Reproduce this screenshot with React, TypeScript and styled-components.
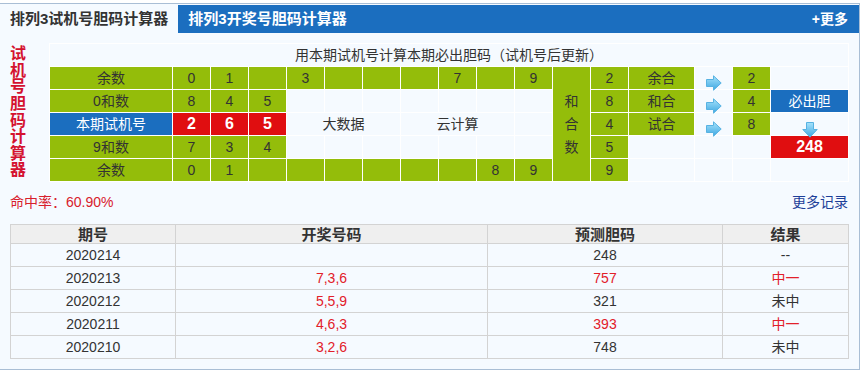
import styled, { createGlobalStyle } from "styled-components";

const GlobalStyle = createGlobalStyle`
body {
    margin: 0;
    background: #fff;
    font-family: "Liberation Sans", "Noto Sans CJK SC", sans-serif;
}
`;

const Panel = styled.div`
margin-top: 3px;
width: 859px;
border: 1px solid #a9bed5;
border-left: none;
background: #f5faff;
padding-bottom: 10px;
`;

const TabBar = styled.div`
margin-top: 1px;
height: 28px;
display: flex;
background: #1b6ebf;
`;

const Tab = styled.div<{ $active?: boolean }>`
padding: 0 10px;
line-height: 28px;
font-size: 15px;
font-weight: bold;
color: ${(p) => (p.$active ? "#333" : "#fff")};
background: ${(p) => (p.$active ? "#f5faff" : "transparent")};
`;

const MoreLink = styled.a`
margin-left: auto;
padding-right: 11px;
line-height: 28px;
font-size: 14px;
font-weight: bold;
color: #fff;
text-decoration: none;
`;

const Body = styled.div`
padding: 0 11px 0 10px;
`;

const CalcArea = styled.div`
display: flex;
margin-top: 10px;
`;

const SideTitle = styled.div`
width: 39px;
flex-shrink: 0;
display: flex;
align-items: center;
`;

const SideText = styled.div`
width: 16px;
font-size: 16px;
line-height: 16.6px;
font-weight: bold;
color: #d4122f;
`;

const CalcTable = styled.table`
border-collapse: collapse;
table-layout: fixed;
width: 799px;
`;

type Tone = "green" | "blue" | "red" | "plain";

const toneBg: Record<Tone, string> = {
    green: "#94bd0a",
    blue: "#1b6ebf",
    red: "#e00e10",
    plain: "transparent",
};

const Cell = styled.td<{ $tone?: Tone; $big?: boolean }>`
border: 1px solid #fff;
padding: 0;
height: 22px;
line-height: 20px;
text-align: center;
vertical-align: middle;
font-size: ${(p) => (p.$big ? "16px" : "14px")};
font-weight: ${(p) => (p.$big ? "bold" : "normal")};
color: ${(p) => (p.$tone === "blue" || p.$tone === "red" ? "#fff" : "#333")};
background: ${(p) => toneBg[p.$tone || "plain"]};
`;

const StackCell = styled(Cell)`
line-height: 23px;
`;

const IconCell = styled(Cell)`
vertical-align: top;
line-height: 0;

svg {
    display: block;
    margin: ${(p) => (p.$big ? "9px auto -9px" : "8px auto -8px")};
}
`;

const StatsRow = styled.div`
display: flex;
justify-content: space-between;
margin-top: 10px;
line-height: 20px;
font-size: 14px;
`;

const HitRate = styled.span`
color: #d8202c;
`;

const RecordLink = styled.a`
color: #1d3f99;
text-decoration: none;
`;

const HistoryTable = styled.table`
margin-top: 12px;
border-collapse: collapse;
table-layout: fixed;
width: 838px;
`;

const HeadCell = styled.th`
height: 18px;
line-height: 17px;
padding: 0;
border: 1px solid #d3d3d3;
background: #efefef;
font-size: 15px;
font-weight: bold;
color: #333;
`;

const HistCell = styled.td<{ $red?: boolean }>`
height: 22px;
line-height: 20px;
padding: 0;
border: 1px solid #d3d3d3;
text-align: center;
font-size: 14px;
color: ${(p) => (p.$red ? "#e2202a" : "#333")};
`;

const RightArrow = () => (
    <svg width="16" height="16" viewBox="0 0 16 16">
        <defs>
            <linearGradient id="arrowR" x1="0" y1="0" x2="0" y2="1">
                <stop offset="0" stopColor="#a6e2fb" />
                <stop offset="1" stopColor="#3ea8e2" />
            </linearGradient>
        </defs>
        <path d="M0.5 4.5H7.5V0.8L15.2 8L7.5 15.2V11.5H0.5Z" fill="url(#arrowR)" stroke="#57b2e2" strokeWidth="1" />
    </svg>
);

const DownArrow = () => (
    <svg width="16" height="16" viewBox="0 0 16 16">
        <defs>
            <linearGradient id="arrowD" x1="0" y1="0" x2="0" y2="1">
                <stop offset="0" stopColor="#a6e2fb" />
                <stop offset="1" stopColor="#3ea8e2" />
            </linearGradient>
        </defs>
        <path d="M4.5 0.5H11.5V7.5H15.2L8 15.2L0.8 7.5H4.5Z" fill="url(#arrowD)" stroke="#57b2e2" strokeWidth="1" />
    </svg>
);

const widths = [123, 38, 38, 38, 38, 38, 38, 38, 38, 38, 38, 38, 38, 66, 38, 38, 78];

const remainTop = ["0", "1", "", "3", "", "", "", "7", "", "9"];
const remainBottom = ["0", "1", "", "", "", "", "", "", "8", "9"];

const history = [
    { issue: "2020214", draw: "", pick: "248", hit: false, result: "--" },
    { issue: "2020213", draw: "7,3,6", pick: "757", hit: true, result: "中一" },
    { issue: "2020212", draw: "5,5,9", pick: "321", hit: false, result: "未中" },
    { issue: "2020211", draw: "4,6,3", pick: "393", hit: true, result: "中一" },
    { issue: "2020210", draw: "3,2,6", pick: "748", hit: false, result: "未中" },
];

const blanks = (n: number) => Array.from({ length: n }, (_, i) => <Cell key={"b" + i} />);

export default function App() {
    return (
        <>
            <GlobalStyle />
            <Panel>
                <TabBar>
                    <Tab $active>排列3试机号胆码计算器</Tab>
                    <Tab>排列3开奖号胆码计算器</Tab>
                    <MoreLink href="#">+更多</MoreLink>
                </TabBar>
                <Body>
                    <CalcArea>
                        <SideTitle>
                            <SideText>试机号胆码计算器</SideText>
                        </SideTitle>
                        <CalcTable>
                            <colgroup>
                                {widths.map((w, i) => <col key={i} style={{ width: w }} />)}
                            </colgroup>
                            <tbody>
                                <tr>
                                    <Cell colSpan={17}>用本期试机号计算本期必出胆码（试机号后更新）</Cell>
                                </tr>
                                <tr>
                                    <Cell $tone="green">余数</Cell>
                                    {remainTop.map((d, i) => <Cell key={i} $tone="green">{d}</Cell>)}
                                    <StackCell $tone="green" rowSpan={5}>和<br />合<br />数</StackCell>
                                    <Cell $tone="green">2</Cell>
                                    <Cell $tone="green">余合</Cell>
                                    <IconCell><RightArrow /></IconCell>
                                    <Cell $tone="green">2</Cell>
                                    <Cell />
                                </tr>
                                <tr>
                                    <Cell $tone="green">0和数</Cell>
                                    {["8", "4", "5"].map((d, i) => <Cell key={i} $tone="green">{d}</Cell>)}
                                    {blanks(7)}
                                    <Cell $tone="green">8</Cell>
                                    <Cell $tone="green">和合</Cell>
                                    <IconCell><RightArrow /></IconCell>
                                    <Cell $tone="green">4</Cell>
                                    <Cell $tone="blue">必出胆</Cell>
                                </tr>
                                <tr>
                                    <Cell $tone="blue">本期试机号</Cell>
                                    {["2", "6", "5"].map((d, i) => <Cell key={i} $tone="red" $big>{d}</Cell>)}
                                    <Cell colSpan={3}>大数据</Cell>
                                    <Cell colSpan={3}>云计算</Cell>
                                    <Cell />
                                    <Cell $tone="green">4</Cell>
                                    <Cell $tone="green">试合</Cell>
                                    <IconCell><RightArrow /></IconCell>
                                    <Cell $tone="green">8</Cell>
                                    <IconCell $big><DownArrow /></IconCell>
                                </tr>
                                <tr>
                                    <Cell $tone="green">9和数</Cell>
                                    {["7", "3", "4"].map((d, i) => <Cell key={i} $tone="green">{d}</Cell>)}
                                    {blanks(7)}
                                    <Cell $tone="green">5</Cell>
                                    <Cell />
                                    <Cell />
                                    <Cell />
                                    <Cell $tone="red" $big>248</Cell>
                                </tr>
                                <tr>
                                    <Cell $tone="green">余数</Cell>
                                    {remainBottom.map((d, i) => <Cell key={i} $tone="green">{d}</Cell>)}
                                    <Cell $tone="green">9</Cell>
                                    {blanks(4)}
                                </tr>
                            </tbody>
                        </CalcTable>
                    </CalcArea>
                    <StatsRow>
                        <HitRate>命中率：60.90%</HitRate>
                        <RecordLink href="#">更多记录</RecordLink>
                    </StatsRow>
                    <HistoryTable>
                        <colgroup>
                            <col style={{ width: 165 }} />
                            <col style={{ width: 312 }} />
                            <col style={{ width: 235 }} />
                            <col style={{ width: 126 }} />
                        </colgroup>
                        <thead>
                            <tr>
                                <HeadCell>期号</HeadCell>
                                <HeadCell>开奖号码</HeadCell>
                                <HeadCell>预测胆码</HeadCell>
                                <HeadCell>结果</HeadCell>
                            </tr>
                        </thead>
                        <tbody>
                            {history.map((row) => (
                                <tr key={row.issue}>
                                    <HistCell>{row.issue}</HistCell>
                                    <HistCell $red>{row.draw}</HistCell>
                                    <HistCell $red={row.hit}>{row.pick}</HistCell>
                                    <HistCell $red={row.hit}>{row.result}</HistCell>
                                </tr>
                            ))}
                        </tbody>
                    </HistoryTable>
                </Body>
            </Panel>
        </>
    );
}
